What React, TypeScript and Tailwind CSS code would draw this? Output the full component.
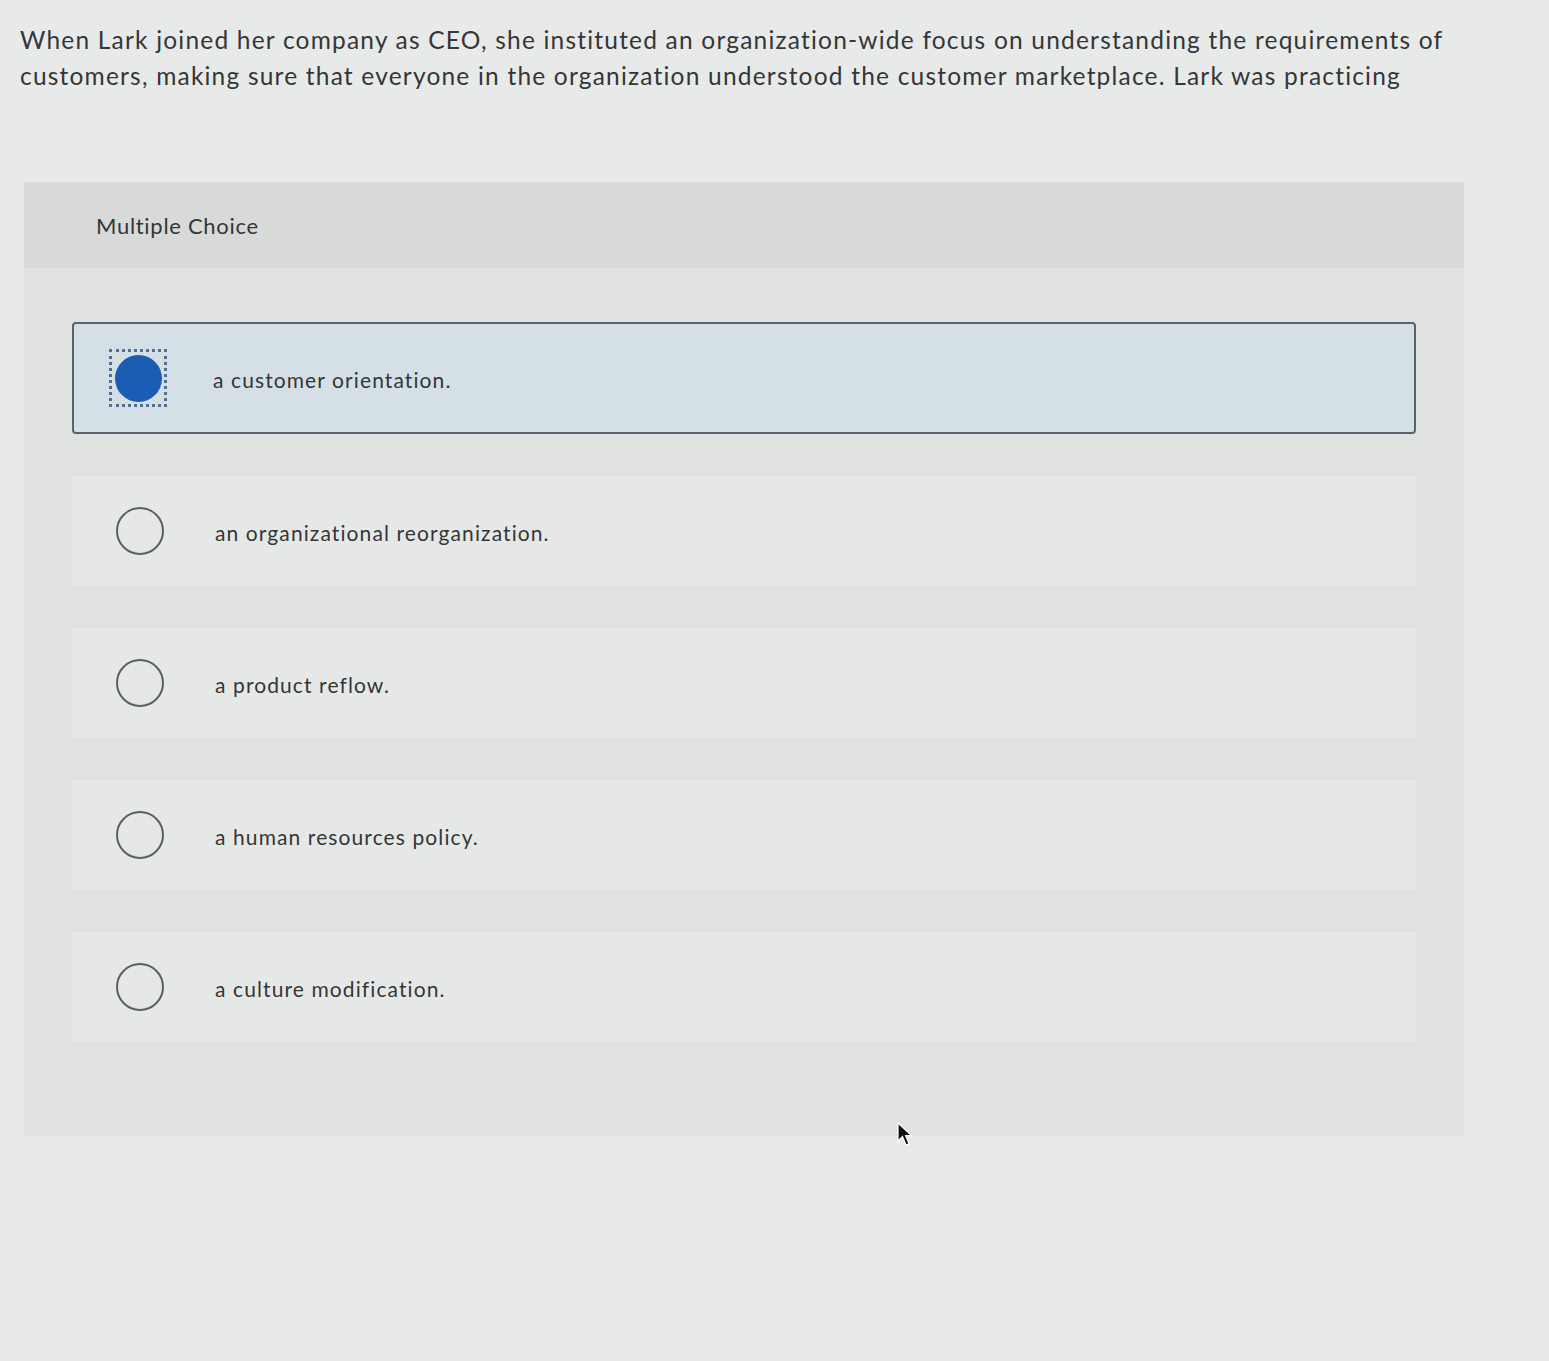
const options = [
	'a customer orientation.',
	'an organizational reorganization.',
	'a product reflow.',
	'a human resources policy.',
	'a culture modification.',
]

function Radio({ checked }: { checked: boolean }) {
	if (checked)
		return (
			<div className="flex h-[58px] w-[58px] items-center justify-center border-[3px] border-dotted border-[#55708c]">
				<div className="h-[47px] w-[47px] rounded-full bg-[#1b5cb5]" />
			</div>
		)
	return (
		<div className="flex h-[58px] w-[58px] items-center justify-center">
			<div className="h-[48px] w-[48px] rounded-full border-[2.5px] border-[#5b5f61]" />
		</div>
	)
}

export default function App() {
	return (
		<div className="relative min-h-[1361px] bg-[#e8eae9] font-['Lato','Liberation_Sans',sans-serif] text-[#343637]">
			<p className="px-5 pt-[22px] text-[24.5px] leading-[36px] tracking-[1.2px]">
				When Lark joined her company as CEO, she instituted an organization-wide focus on understanding the requirements of
				<br />
				customers, making sure that everyone in the organization understood the customer marketplace. Lark was practicing
			</p>

			<section className="mt-[88px] ml-6 w-[1440px] bg-[#e0e2e1]">
				<div className="flex h-[86px] items-center bg-[#d8dad9] pl-[72px] text-[22px] tracking-[0.7px]">
					Multiple Choice
				</div>

				<ul className="flex flex-col gap-[42px] px-12 pt-[54px] pb-[94px]">
					{options.map((o, i) => (
						<li
							key={o}
							className={
								i === 0
									? 'flex h-[112px] items-center gap-[46px] rounded-[4px] border-2 border-[#58656f] bg-[#d4e0e5] pl-[35px]'
									: 'flex h-[110px] items-center gap-[46px] bg-[#e6e8e7] pl-[39px]'
							}
						>
							<Radio checked={i === 0} />
							<span className="pt-[4px] text-[21px] tracking-[1.1px]">{o}</span>
						</li>
					))}
				</ul>
			</section>

			<svg
				className="absolute top-[1122px] left-[897px]"
				width="16"
				height="26"
				viewBox="0 0 16 26"
			>
				<path
					d="M1 1 L1 19 L5.5 14.5 L9 23 L12 21.8 L8.6 13.6 L14.5 13.6 Z"
					fill="#111"
					stroke="#fff"
					strokeWidth="1.2"
				/>
			</svg>
		</div>
	)
}
